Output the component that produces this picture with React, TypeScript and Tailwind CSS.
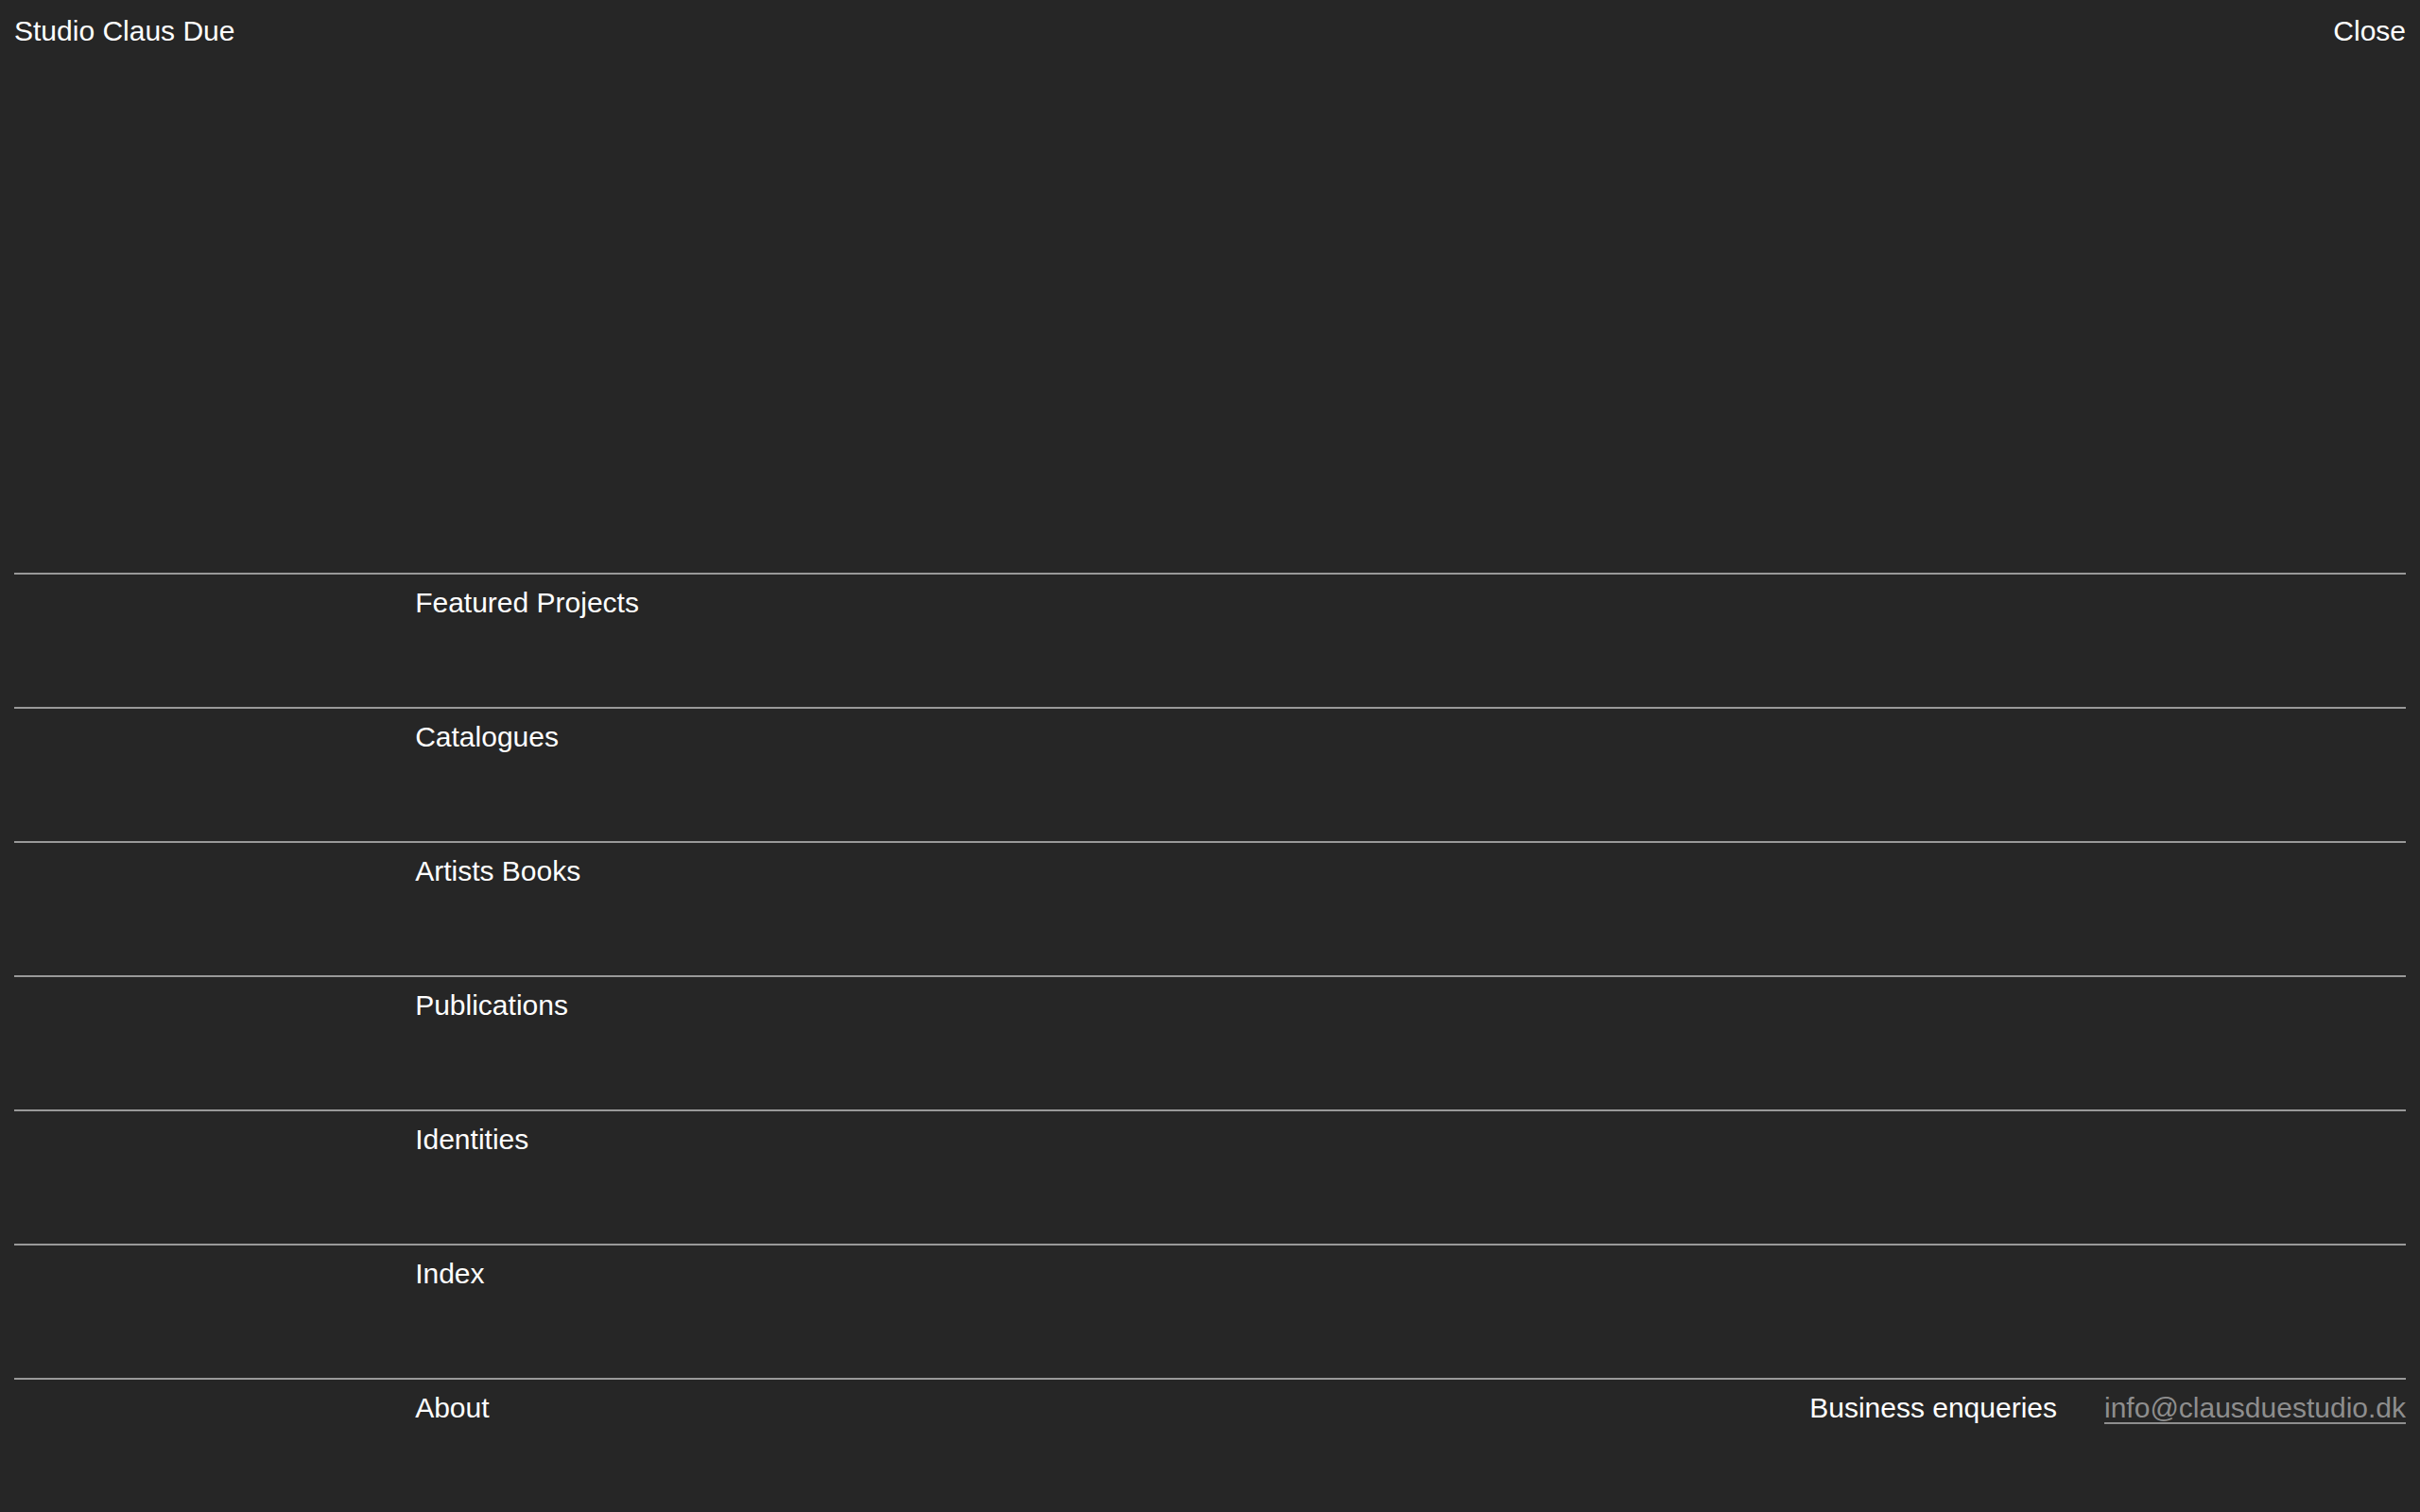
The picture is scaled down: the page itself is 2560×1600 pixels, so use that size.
const menuItems = [
  "Featured Projects",
  "Catalogues",
  "Artists Books",
  "Publications",
  "Identities",
  "Index",
];

export default function App() {
  return (
    <div
      className="flex h-screen flex-col bg-[#262626] px-[15px] text-[30px] leading-[36px] text-white antialiased"
      style={{ fontFamily: '"Liberation Sans", Arial, sans-serif' }}
    >
      <header className="flex items-start justify-between pt-[15px]">
        <a href="#">Studio Claus Due</a>
        <button>Close</button>
      </header>

      <div className="flex-1" />

      <nav className="flex flex-col">
        {menuItems.map((label) => (
          <div
            key={label}
            className="grid h-[142px] grid-cols-12 gap-x-[15px] border-t-2 border-[#999999] pt-[12px]"
          >
            <a href="#" className="col-span-4 col-start-3">
              {label}
            </a>
          </div>
        ))}
        <div className="grid h-[142px] grid-cols-12 gap-x-[15px] border-t-2 border-[#999999] pt-[12px]">
          <a href="#" className="col-span-4 col-start-3">
            About
          </a>
          <div className="col-span-6 col-start-7 flex justify-end gap-[50px]">
            <span>Business enqueries</span>
            <a
              href="mailto:info@clausduestudio.dk"
              className="text-[#8e8e8e] underline decoration-2 underline-offset-[5px]"
            >
              info@clausduestudio.dk
            </a>
          </div>
        </div>
      </nav>
    </div>
  );
}
